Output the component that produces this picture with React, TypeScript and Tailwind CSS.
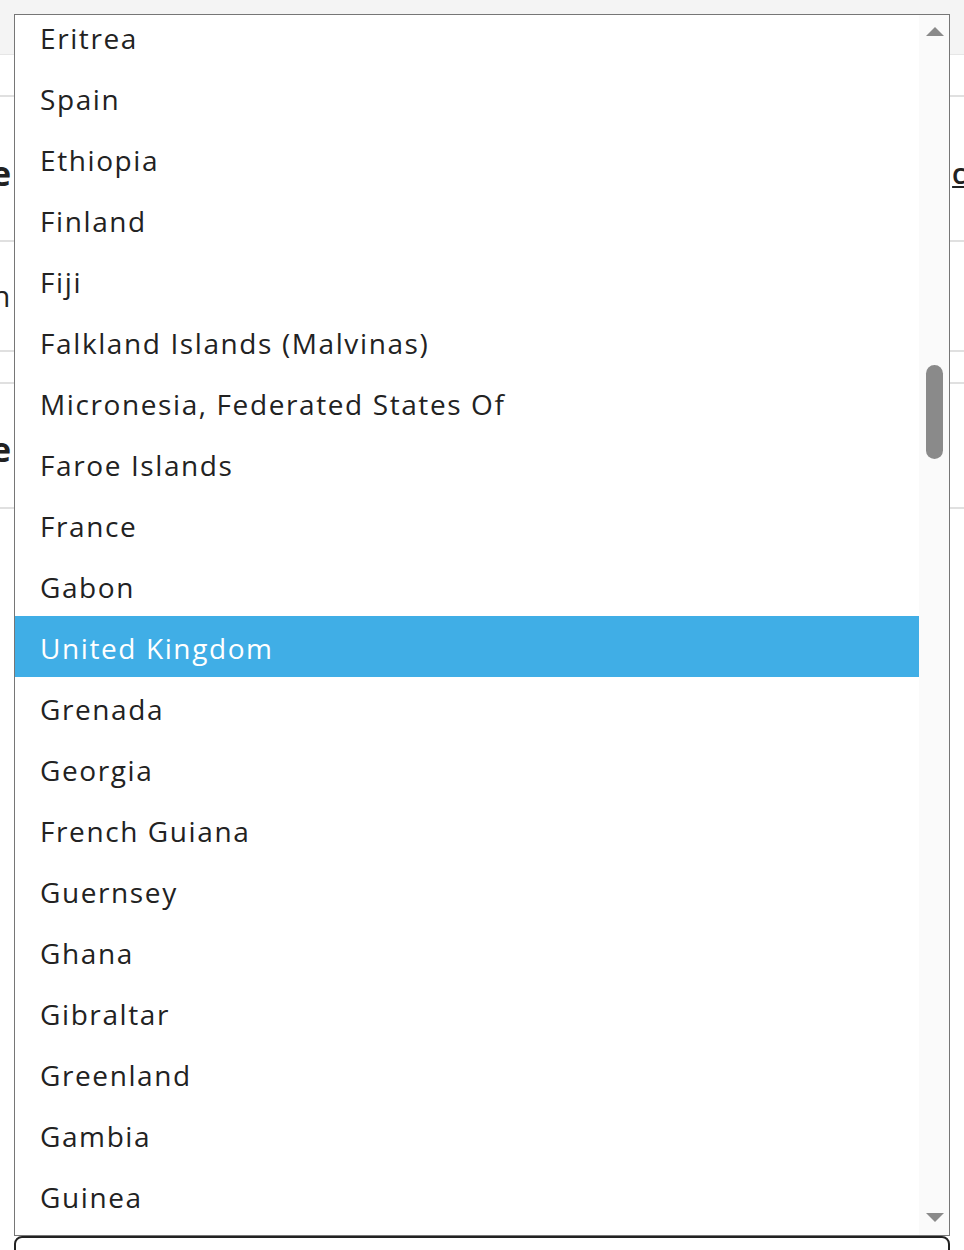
import React from "react";

const countries = [
  "Eritrea",
  "Spain",
  "Ethiopia",
  "Finland",
  "Fiji",
  "Falkland Islands (Malvinas)",
  "Micronesia, Federated States Of",
  "Faroe Islands",
  "France",
  "Gabon",
  "United Kingdom",
  "Grenada",
  "Georgia",
  "French Guiana",
  "Guernsey",
  "Ghana",
  "Gibraltar",
  "Greenland",
  "Gambia",
  "Guinea",
  "Guadeloupe",
];

export default function App() {
  return (
    <div
      className="relative w-[964px] h-[1250px] overflow-hidden bg-white"
      style={{ fontFamily: "'Open Sans', Lato, sans-serif" }}
    >
      {/* background page */}
      <div className="flex flex-col">
        <div className="h-[55px] bg-[#f4f4f4] border-b border-[#e6e6e6]" />
        <div className="h-[42px] border-b-2 border-[#e0e0e0]" />
        <div className="h-[145px] border-b-2 border-[#e0e0e0] flex items-center justify-between pt-[8px]">
          <span className="text-[34px] font-bold text-[#222] -ml-[9px] leading-none">e</span>
          <span className="text-[28px] font-semibold text-[#222] underline -mr-[2px] leading-none">c</span>
        </div>
        <div className="h-[110px] border-b-2 border-[#e0e0e0] flex items-center">
          <span className="text-[30px] text-[#222] -ml-[8px] leading-none">n</span>
        </div>
        <div className="h-[32px] border-b-2 border-[#e0e0e0]" />
        <div className="h-[125px] border-b-2 border-[#e0e0e0] flex items-center pt-[6px]">
          <span className="text-[34px] font-bold text-[#222] -ml-[9px] leading-none">e</span>
        </div>
      </div>

      {/* bottom rounded field */}
      <div className="absolute left-[14px] top-[1236px] w-[936px] h-[40px] rounded-[8px] border-2 border-[#222] bg-white" />

      {/* open select listbox */}
      <div className="absolute left-[14px] top-[14px] w-[936px] h-[1222px] border border-[#767676] bg-white flex overflow-hidden">
        <div className="flex-1 overflow-hidden">
          <ul className="-mt-[9px]">
            {countries.map((c) => (
              <li
                key={c}
                className={
                  "h-[61px] flex items-center pl-[25px] text-[28px] tracking-[1.6px] " +
                  (c === "United Kingdom" ? "bg-[#40aee6] text-white" : "text-[#222]")
                }
              >
                <span className="mt-[2px]">{c}</span>
              </li>
            ))}
          </ul>
        </div>
        <div className="w-[30px] bg-[#fafafa] flex flex-col items-center">
          <svg width="18" height="9" viewBox="0 0 18 9" className="mt-[12px] ml-[1px]">
            <polygon points="9,0 18,9 0,9" fill="#8a8a8a" />
          </svg>
          <div className="mt-[329px] ml-[1px] w-[17px] h-[94px] rounded-full bg-[#8a8a8a]" />
          <div className="flex-1" />
          <svg width="18" height="9" viewBox="0 0 18 9" className="mb-[13px] ml-[1px]">
            <polygon points="0,0 18,0 9,9" fill="#8a8a8a" />
          </svg>
        </div>
      </div>
    </div>
  );
}
